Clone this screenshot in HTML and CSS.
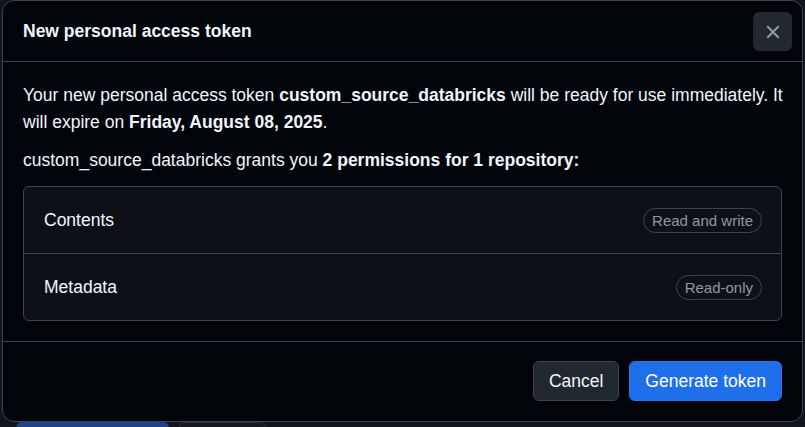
FILE: index.html
```html
<!DOCTYPE html>
<html lang="en">
<head>
<meta charset="utf-8">
<title>New personal access token</title>
<link rel="stylesheet" href="styles.css">
</head>
<body>
<div class="page">
  <div class="dialog" role="dialog" aria-labelledby="dlg-title">
    <header class="dialog-header">
      <h1 id="dlg-title" class="dialog-title">New personal access token</h1>
      <button class="close-btn" aria-label="Close">
        <svg width="22" height="22" viewBox="0 0 16 16" aria-hidden="true"><path fill="currentColor" d="M3.72 3.72a.75.75 0 0 1 1.06 0L8 6.94l3.22-3.22a.749.749 0 0 1 1.275.326.749.749 0 0 1-.215.734L9.06 8l3.22 3.22a.749.749 0 0 1-.326 1.275.749.749 0 0 1-.734-.215L8 9.06l-3.22 3.22a.751.751 0 0 1-1.042-.018.751.751 0 0 1-.018-1.042L6.94 8 3.72 4.78a.75.75 0 0 1 0-1.06Z"/></svg>
      </button>
    </header>
    <div class="dialog-body">
      <p class="lead">Your new personal access token <strong>custom_source_databricks</strong> will be ready for use immediately. It will expire on <strong>Friday, August 08, 2025</strong>.</p>
      <p class="grants">custom_source_databricks grants you <strong>2 permissions for 1 repository:</strong></p>
      <ul class="perm-list">
        <li class="perm-row"><span class="perm-name">Contents</span><span class="badge">Read and write</span></li>
        <li class="perm-row"><span class="perm-name">Metadata</span><span class="badge">Read-only</span></li>
      </ul>
    </div>
    <footer class="dialog-footer">
      <button class="btn btn-default">Cancel</button>
      <button class="btn btn-primary">Generate token</button>
    </footer>
  </div>
  <div class="under-row">
    <button class="under-btn under-primary">Generate token</button>
    <button class="under-btn under-default">Cancel</button>
  </div>
</div>
</body>
</html>
```
FILE: styles.css
```css
* { box-sizing: border-box; }
html, body {
  margin: 0;
  padding: 0;
  background: #12161c;
  font-family: "Liberation Sans", Arial, sans-serif;
  color: #f0f6fc;
  overflow: hidden;
}
.page {
  display: flex;
  flex-direction: column;
  width: 805px;
  height: 427px;
  overflow: hidden;
}
.dialog {
  margin: 0 2px;
  width: 801px;
  height: 422px;
  background: #010409;
  border: 1px solid #3d444d;
  border-radius: 12px;
  display: flex;
  flex-direction: column;
  flex-shrink: 0;
}
.dialog-header {
  height: 61px;
  display: flex;
  align-items: center;
  justify-content: space-between;
  padding: 0 10px 0 20px;
  border-bottom: 1px solid #3d444d;
}
.dialog-title {
  margin: 0;
  font-size: 17.5px;
  font-weight: 700;
  color: #f0f6fc;
}
.close-btn {
  width: 39px;
  height: 39px;
  border: 0;
  border-radius: 6px;
  background: #212830;
  color: #9198a1;
  display: flex;
  align-items: center;
  justify-content: center;
  padding: 0;
  margin-top: 1px;
}
.dialog-body {
  flex: 1;
  padding: 20px 20px 0 20px;
  display: flex;
  flex-direction: column;
}
.lead {
  margin: 0 -4px 0 0;
  font-size: 17.5px;
  line-height: 27px;
}
.grants {
  margin: 11px 0 0 0;
  font-size: 17.5px;
  line-height: 27px;
}
.perm-list {
  list-style: none;
  margin: 12px 0 0 0;
  padding: 0;
  border: 1px solid #3d444d;
  border-radius: 6px;
  background: #0d1117;
}
.perm-row {
  height: 66px;
  display: flex;
  align-items: center;
  justify-content: space-between;
  padding: 0 19px 0 20px;
}
.perm-row + .perm-row {
  border-top: 1px solid #3d444d;
  height: 67px;
}
.perm-name {
  font-size: 17.5px;
  color: #f0f6fc;
  margin-top: 1px;
}
.badge {
  height: 25px;
  display: inline-flex;
  align-items: center;
  padding: 0 8px;
  border: 1px solid #3d444d;
  border-radius: 999px;
  font-size: 15px;
  color: #9198a1;
}
.dialog-footer {
  height: 80px;
  border-top: 1px solid #3d444d;
  display: flex;
  align-items: center;
  justify-content: flex-end;
  gap: 10px;
  padding: 0 20px 1px 20px;
}
.btn {
  height: 40px;
  border-radius: 6px;
  font-family: "Liberation Sans", Arial, sans-serif;
  font-size: 17.5px;
  padding: 0 15px;
  border: 1px solid transparent;
}
.btn-default {
  background: #212830;
  border-color: #3d444d;
  color: #f0f6fc;
}
.btn-primary {
  background: #1f6feb;
  border-color: #2a75ee;
  color: #ffffff;
}
.under-row {
  display: flex;
  gap: 10px;
  padding-left: 16px;
}
.under-btn {
  height: 32px;
  border-radius: 6px;
  font-family: "Liberation Sans", Arial, sans-serif;
  font-size: 15px;
  border: 1px solid transparent;
  padding: 0 16px;
  color: #9aa0a8;
}
.under-primary {
  width: 153px;
  background: #1d4589;
}
.under-default {
  width: 87px;
  background: #14181e;
  border-color: #2a2f36;
}
```
